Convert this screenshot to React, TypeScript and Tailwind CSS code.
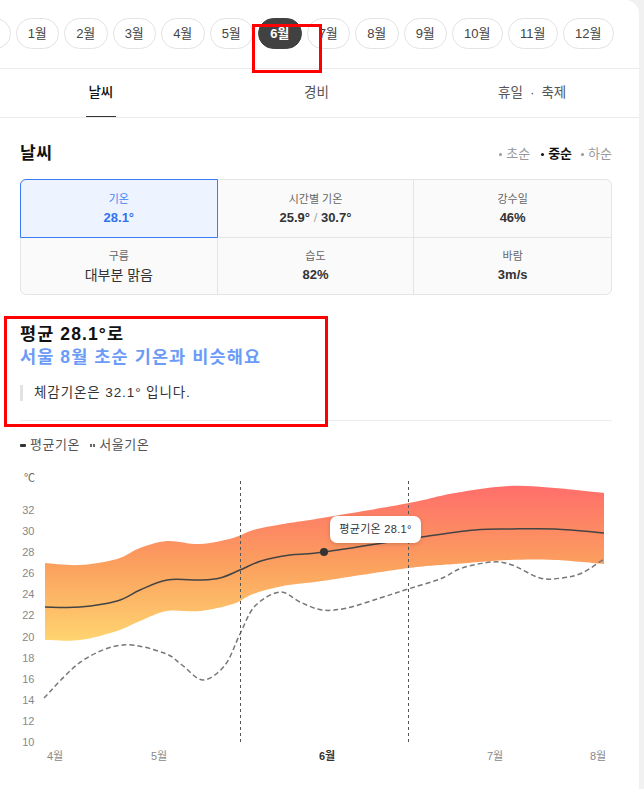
import React from "react";

type P = [number, number];

function smooth(pts: P[], move = true): string {
  let d = (move ? "M" : "L") + pts[0][0] + "," + pts[0][1];
  for (let i = 0; i < pts.length - 1; i++) {
    const p0 = pts[i - 1] || pts[i];
    const p1 = pts[i];
    const p2 = pts[i + 1];
    const p3 = pts[i + 2] || p2;
    const c1x = p1[0] + (p2[0] - p0[0]) / 6;
    const c1y = p1[1] + (p2[1] - p0[1]) / 6;
    const c2x = p2[0] - (p3[0] - p1[0]) / 6;
    const c2y = p2[1] - (p3[1] - p1[1]) / 6;
    d += ` C${c1x.toFixed(1)},${c1y.toFixed(1)} ${c2x.toFixed(1)},${c2y.toFixed(1)} ${p2[0]},${p2[1]}`;
  }
  return d;
}

const bandTop: P[] = [
  [45, 562], [80, 564], [117, 558], [140, 547], [167, 540], [200, 543], [233, 537],
  [253, 529], [283, 523], [322, 517], [409, 502], [455, 492], [509, 485], [555, 487], [604, 492],
];
const bandBottom: P[] = [
  [45, 639], [80, 639], [117, 630], [140, 620], [167, 610], [200, 610], [233, 603],
  [253, 593], [283, 585], [322, 580], [409, 567], [455, 563], [509, 559], [555, 559], [604, 563],
];
const avg: P[] = [
  [45, 606], [80, 606], [117, 600], [140, 589], [167, 579], [200, 579], [220, 577],
  [240, 569], [261, 560], [290, 554], [324, 551], [422, 536], [475, 529], [512, 528], [555, 528], [604, 532],
];
const seoul: P[] = [
  [44, 697], [82, 660], [123, 644], [164, 652], [182, 664], [203, 679], [225, 664],
  [240, 633], [255, 605], [280, 591], [300, 601], [322, 609], [347, 607], [380, 597],
  [408, 588], [440, 578], [462, 567], [492, 561], [512, 564], [540, 577], [562, 577], [582, 572], [604, 558],
];

const bandPath = smooth(bandTop) + " " + smooth([...bandBottom].reverse(), false) + " Z";

const yLabels = [32, 30, 28, 26, 24, 22, 20, 18, 16, 14, 12, 10];
const months = ["1월", "2월", "3월", "4월", "5월", "6월", "7월", "8월", "9월", "10월", "11월", "12월"];

export default function App() {
  return (
    <div className="relative w-[644px] h-[789px] overflow-hidden bg-[#f1f1f1] font-['Liberation_Sans','Noto_Sans_CJK_KR',sans-serif] text-[#333]">
      <div className="w-[639px] h-full bg-white rounded-tr-[14px] overflow-hidden">
        {/* month chips */}
        <div className="h-[69px] border-b border-[#ebebeb] pt-[18px] overflow-hidden">
          <div className="flex gap-[5px] ml-[-33px]">
            <div className="shrink-0 w-[43.5px] h-[31px] rounded-full border border-[#e3e3e3]" />
            {months.map((m) => {
              const active = m === "6월";
              const wide = m.length > 2;
              return (
                <div
                  key={m}
                  className={
                    "shrink-0 h-[31px] rounded-full border flex items-center justify-center text-[13px] leading-[16px] " +
                    (wide ? "w-[50.5px] " : "w-[43.5px] ") +
                    (active
                      ? "bg-[#414141] border-[#414141] text-white font-bold"
                      : "border-[#e3e3e3] text-[#444]")
                  }
                >
                  {m}
                </div>
              );
            })}
          </div>
        </div>

        {/* tabs */}
        <div className="h-[49px] border-b border-[#ebebeb] overflow-hidden">
          <div className="grid grid-cols-3 w-[647px] ml-[-7px] h-[48px]">
            <div className="relative flex items-center justify-center text-[13.5px] text-[#111] font-medium">
              날씨
              <div className="absolute bottom-[-1px] left-1/2 -translate-x-1/2 w-[30px] h-[2px] bg-[#333]" />
            </div>
            <div className="flex items-center justify-center text-[13.5px] text-[#555]">경비</div>
            <div className="flex items-center justify-center text-[13.5px] text-[#555]">
              휴일<span className="mx-[7px]">·</span>축제
            </div>
          </div>
        </div>

        {/* content */}
        <div className="ml-[20px] w-[592px]">
          <div className="mt-[24px] h-[24px] flex items-center justify-between">
            <div className="text-[17px] font-bold text-[#111] leading-[24px] tracking-[0.5px]">날씨</div>
            <div className="flex items-center text-[13px] leading-[16px]">
              <span className="w-[3px] h-[3px] rounded-full bg-[#999] mr-[4px]" />
              <span className="text-[#999]">초순</span>
              <span className="w-[3px] h-[3px] rounded-full bg-[#111] ml-[11px] mr-[4px]" />
              <span className="text-[#111] font-bold">중순</span>
              <span className="w-[3px] h-[3px] rounded-full bg-[#999] ml-[9px] mr-[4px]" />
              <span className="text-[#999]">하순</span>
            </div>
          </div>

          {/* table */}
          <div className="mt-[13px] rounded-[6px] border border-[#e5e5e5] bg-[#fafafa] grid grid-cols-3">
            <div className="relative h-[58px] border-r border-b border-[#e5e5e5] bg-[#eef4ff] rounded-tl-[5px] flex flex-col items-center pt-[12px]">
              <div className="absolute -inset-px border border-[#3a7cf5] rounded-tl-[6px] pointer-events-none" />
              <div className="text-[11px] leading-[14px] text-[#3f82f6]">기온</div>
              <div className="mt-[3px] text-[13px] leading-[18px] font-bold text-[#2f72ef]">28.1°</div>
            </div>
            <div className="h-[58px] border-r border-b border-[#e5e5e5] flex flex-col items-center pt-[12px]">
              <div className="text-[11px] leading-[14px] text-[#666]">시간별 기온</div>
              <div className="mt-[3px] text-[13px] leading-[18px] font-bold text-[#333]">
                25.9° <span className="font-normal text-[#aaa]">/</span> 30.7°
              </div>
            </div>
            <div className="h-[58px] border-b border-[#e5e5e5] flex flex-col items-center pt-[12px]">
              <div className="text-[11px] leading-[14px] text-[#666]">강수일</div>
              <div className="mt-[3px] text-[13px] leading-[18px] font-bold text-[#333]">46%</div>
            </div>
            <div className="h-[56px] border-r border-[#e5e5e5] flex flex-col items-center pt-[11px]">
              <div className="text-[11px] leading-[14px] text-[#666]">구름</div>
              <div className="mt-[3px] text-[14px] leading-[18px] text-[#333]">대부분 맑음</div>
            </div>
            <div className="h-[56px] border-r border-[#e5e5e5] flex flex-col items-center pt-[11px]">
              <div className="text-[11px] leading-[14px] text-[#666]">습도</div>
              <div className="mt-[3px] text-[13px] leading-[18px] font-bold text-[#333]">82%</div>
            </div>
            <div className="h-[56px] flex flex-col items-center pt-[11px]">
              <div className="text-[11px] leading-[14px] text-[#666]">바람</div>
              <div className="mt-[3px] text-[13px] leading-[18px] font-bold text-[#333]">3m/s</div>
            </div>
          </div>

          {/* summary */}
          <div className="mt-[28px] text-[17.5px] leading-[23px] font-bold tracking-[1.1px]">
            <div className="text-[#111]">평균 28.1°로</div>
            <div className="text-[#6b9bf7]">서울 8월 초순 기온과 비슷해요</div>
          </div>
          <div className="mt-[16px] h-[16px] border-l-[3px] border-[#e2e2e2] pl-[11px] text-[13.5px] leading-[16px] tracking-[0.9px] text-[#333]">
            체감기온은 32.1° 입니다.
          </div>
          <div className="mt-[19px] h-px bg-[#ececec]" />

          {/* legend */}
          <div className="mt-[16px] h-[16px] flex items-center text-[13px] leading-[16px] tracking-[0.5px] text-[#555]">
            <span className="w-[6px] h-[3px] rounded-[1px] bg-[#333] mr-[4px]" />
            <span>평균기온</span>
            <span className="ml-[10px] mr-[4px] flex gap-[1.5px]">
              <span className="w-[2px] h-[3px] bg-[#666]" />
              <span className="w-[2px] h-[3px] bg-[#666]" />
            </span>
            <span>서울기온</span>
          </div>
        </div>

        {/* chart */}
        <div className="relative mt-[8px] w-[639px] h-[329px]">
          <svg width="639" height="329" viewBox="0 460 639 329" className="block">
            <defs>
              <linearGradient id="band" gradientUnits="userSpaceOnUse" x1="0" y1="485" x2="0" y2="640">
                <stop offset="0" stopColor="#ff6e6b" />
                <stop offset="0.5" stopColor="#fb9f5e" />
                <stop offset="1" stopColor="#ffd470" />
              </linearGradient>
            </defs>
            <text x="24" y="481" fontSize="11" fill="#666">℃</text>
            {yLabels.map((t) => (
              <text
                key={t}
                x="34.5"
                y={741 - (t - 10) * 10.55 + 4}
                fontSize="11"
                fill="#888"
                textAnchor="end"
              >
                {t}
              </text>
            ))}
            <path d={bandPath} fill="url(#band)" />
            <path d={smooth(avg)} fill="none" stroke="#444" strokeWidth="1.5" />
            <path d={smooth(seoul)} fill="none" stroke="#777" strokeWidth="1.5" strokeDasharray="5 3" />
            <line x1="240.5" y1="480" x2="240.5" y2="742" stroke="#555" strokeWidth="1" strokeDasharray="3 3" />
            <line x1="408.5" y1="480" x2="408.5" y2="742" stroke="#555" strokeWidth="1" strokeDasharray="3 3" />
            <circle cx="324" cy="551" r="4" fill="#333" />
            <text x="55" y="759" fontSize="11" fill="#888" textAnchor="middle">4월</text>
            <text x="159" y="759" fontSize="11" fill="#888" textAnchor="middle">5월</text>
            <text x="327" y="759" fontSize="11" fill="#333" fontWeight="bold" textAnchor="middle">6월</text>
            <text x="495" y="759" fontSize="11" fill="#888" textAnchor="middle">7월</text>
            <text x="598" y="759" fontSize="11" fill="#888" textAnchor="middle">8월</text>
          </svg>
          <div className="absolute left-[330px] top-[55px] w-[91px] h-[27px] rounded-[7px] bg-white shadow-[0_1px_4px_rgba(0,0,0,0.18)] flex items-center justify-center text-[11px] tracking-[0.3px] text-[#333]">
            평균기온 28.1°
          </div>
        </div>
      </div>

      {/* annotation boxes */}
      <div className="absolute left-[252px] top-[24px] w-[70px] h-[49px] border-[3px] border-[#ff0000] pointer-events-none" />
      <div className="absolute left-[4px] top-[316px] w-[324px] h-[111px] border-[3px] border-[#ff0000] pointer-events-none" />
    </div>
  );
}
